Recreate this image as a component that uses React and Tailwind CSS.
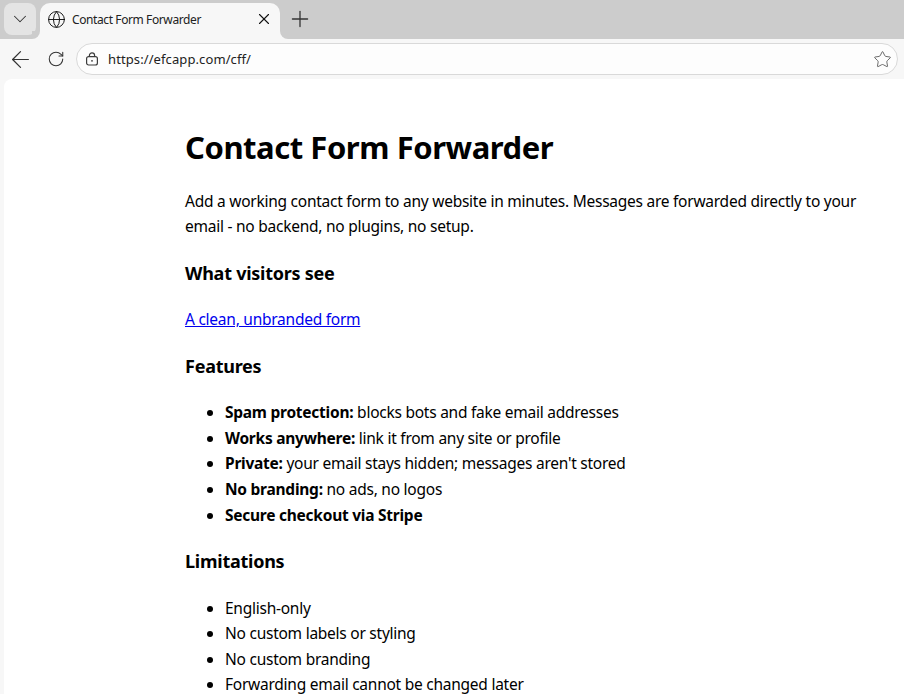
import { ChevronDown, X, Plus, ArrowLeft, RotateCw, Globe, Star } from 'lucide-react';

const LockIcon = () => (
    <svg width="14" height="14" viewBox="0 0 14 14" fill="none" stroke="#3c3c3c" strokeWidth="1.2">
        <rect x="1.6" y="4.6" width="10.8" height="8.4" rx="2" />
        <path d="M4.4 4.6V3.4a2.6 2.6 0 0 1 5.2 0v1.2" />
        <circle cx="7" cy="8.8" r="0.9" fill="#3c3c3c" stroke="none" />
    </svg>
);

const App = () => {
    return (
        <div className="h-[694px] w-[904px] overflow-hidden bg-[#f7f7f7] font-['Noto_Sans',sans-serif] text-black">
            {/* Tab strip */}
            <div className="flex h-[39px] items-end bg-[#cccccc] pl-1">
                <div className="mb-[4px] flex h-[32px] w-[32px] items-center justify-center rounded-lg bg-[#e4e4e4]">
                    <ChevronDown size={22} strokeWidth={1.1} color="#333" />
                </div>
                <div className="relative ml-1 flex h-[36px] w-[240px] items-center rounded-t-[10px] bg-[#f7f7f7] pb-[4px] pl-[7px] pr-[7px]">
                    {/* flared tab corners */}
                    <div className="absolute bottom-0 left-[-8px] h-2 w-2 bg-[#f7f7f7]">
                        <div className="h-full w-full rounded-br-lg bg-[#cccccc]"></div>
                    </div>
                    <div className="absolute bottom-0 right-[-8px] h-2 w-2 bg-[#f7f7f7]">
                        <div className="h-full w-full rounded-bl-lg bg-[#cccccc]"></div>
                    </div>
                    <Globe size={19} strokeWidth={1.2} color="#111" />
                    <span className="ml-[6px] mt-[2px] flex-1 text-xs tracking-[-0.4px] text-[#222]">Contact Form Forwarder</span>
                    <X size={18} strokeWidth={1.5} color="#111" />
                </div>
                <div className="mb-[4px] ml-[7px] flex h-[32px] items-center">
                    <Plus size={26} strokeWidth={1.2} color="#333" />
                </div>
            </div>

            {/* Toolbar */}
            <div className="flex h-[40px] items-center bg-[#f7f7f7] pl-[7px] pr-[6px]">
                <ArrowLeft size={27} strokeWidth={1.1} color="#333" />
                <RotateCw size={18} strokeWidth={1.4} color="#333" className="ml-[13px]" />
                <div className="ml-[11px] flex h-[32px] flex-1 items-center rounded-full border border-[#d9d9d9] bg-[#fdfdfd] pl-[8px] pr-[5px]">
                    <LockIcon />
                    <span className="ml-[9px] flex-1 pt-[2px] text-[13px] tracking-[0.1px] text-[#222]">https://efcapp.com/cff/</span>
                    <Star size={19} strokeWidth={1.1} color="#555" />
                </div>
            </div>

            {/* Page */}
            <div className="ml-1 h-[615px] overflow-hidden rounded-tl-lg bg-white pl-[181px] pr-[40px] pt-[47px] text-[15.5px] leading-[25.6px] tracking-[-0.25px]">
                <h1 className="text-[31px] font-bold leading-[42px] tracking-[-0.45px]">Contact Form Forwarder</h1>
                <p className="mt-[20.7px]">
                    Add a working contact form to any website in minutes. Messages are forwarded directly to your email - no backend, no plugins, no setup.
                </p>
                <h2 className="mt-[21.3px] text-lg font-bold leading-[25px] tracking-[-0.25px]">What visitors see</h2>
                <p className="mt-[21px]">
                    <a href="#" className="text-[#0000ee] underline">A clean, unbranded form</a>
                </p>
                <h2 className="mt-[21px] text-lg font-bold leading-[25px] tracking-[-0.25px]">Features</h2>
                <ul className="mt-[21.4px] list-disc pl-10">
                    <li><b>Spam protection:</b> blocks bots and fake email addresses</li>
                    <li><b>Works anywhere:</b> link it from any site or profile</li>
                    <li><b>Private:</b> your email stays hidden; messages aren't stored</li>
                    <li><b>No branding:</b> no ads, no logos</li>
                    <li><b>Secure checkout via Stripe</b></li>
                </ul>
                <h2 className="mt-[20.6px] text-lg font-bold leading-[25px] tracking-[-0.25px]">Limitations</h2>
                <ul className="mt-[21.9px] list-disc pl-10">
                    <li>English-only</li>
                    <li>No custom labels or styling</li>
                    <li>No custom branding</li>
                    <li>Forwarding email cannot be changed later</li>
                </ul>
            </div>
        </div>
    );
};

export default App;
